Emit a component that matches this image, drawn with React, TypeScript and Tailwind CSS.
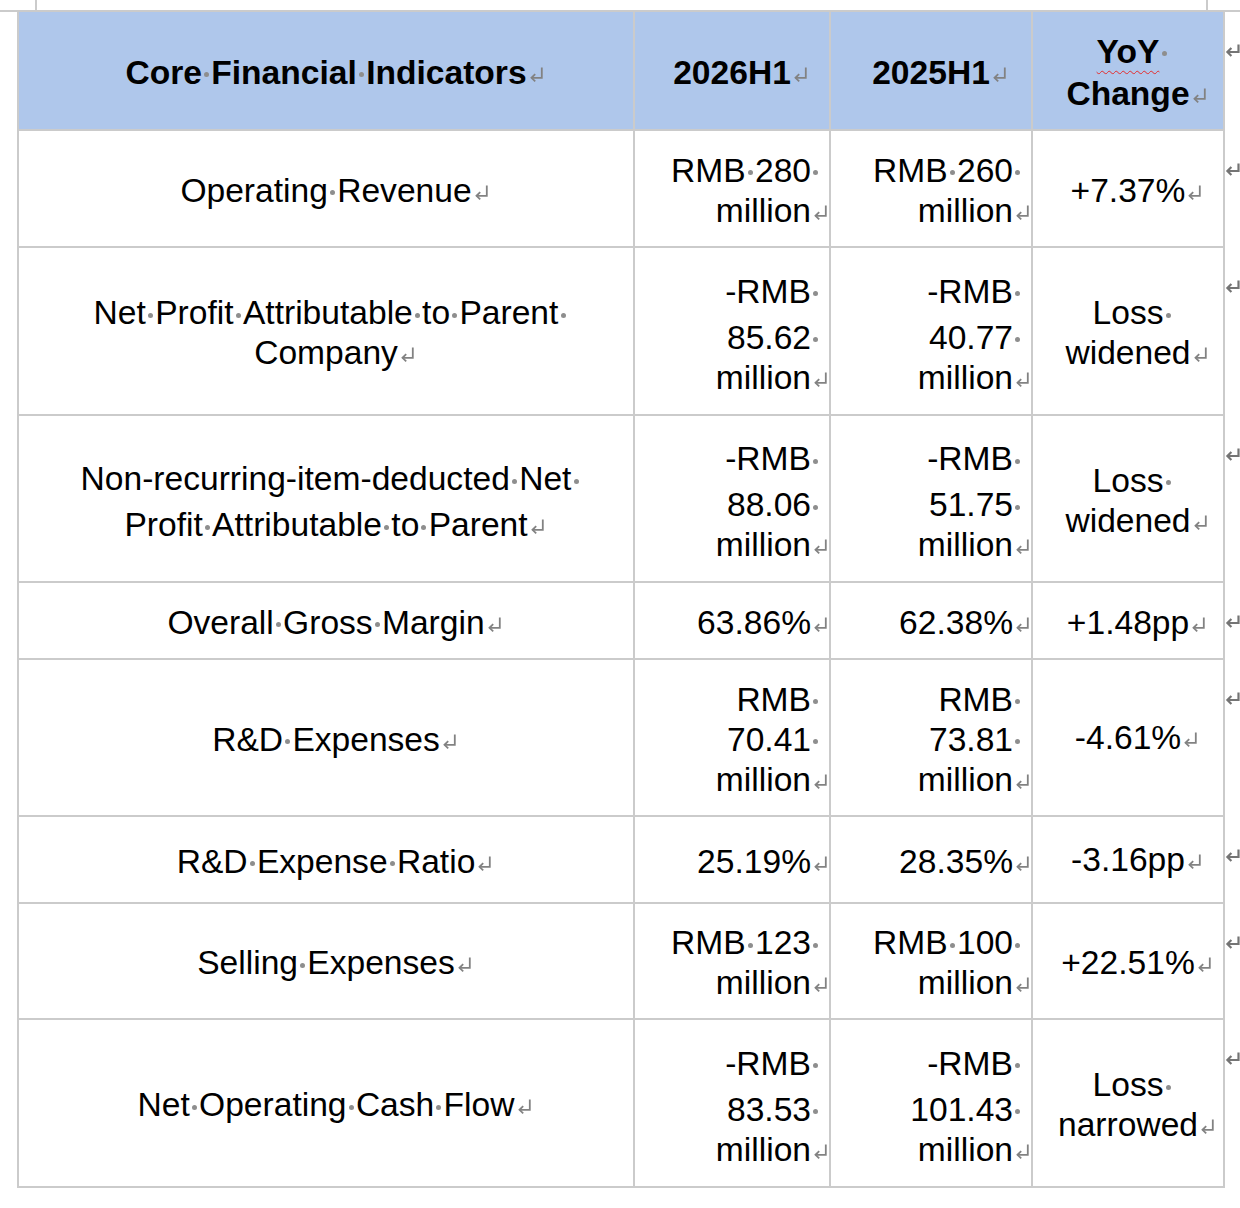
type End = "sp" | "p" | null;
type L = [string, End];

const rows: { h: string; label: L[]; a: L[]; b: L[]; c: L[] }[] = [
  {
    h: "h-[117px]",
    label: [["Operating Revenue", "p"]],
    a: [["RMB 280", "sp"], ["million", "p"]],
    b: [["RMB 260", "sp"], ["million", "p"]],
    c: [["+7.37%", "p"]],
  },
  {
    h: "h-[168px]",
    label: [["Net Profit Attributable to Parent", "sp"], ["Company", "p"]],
    a: [["-RMB", "sp"], ["85.62", "sp"], ["million", "p"]],
    b: [["-RMB", "sp"], ["40.77", "sp"], ["million", "p"]],
    c: [["Loss", "sp"], ["widened", "p"]],
  },
  {
    h: "h-[167px]",
    label: [["Non-recurring-item-deducted Net", "sp"], ["Profit Attributable to Parent", "p"]],
    a: [["-RMB", "sp"], ["88.06", "sp"], ["million", "p"]],
    b: [["-RMB", "sp"], ["51.75", "sp"], ["million", "p"]],
    c: [["Loss", "sp"], ["widened", "p"]],
  },
  {
    h: "h-[77px]",
    label: [["Overall Gross Margin", "p"]],
    a: [["63.86%", "p"]],
    b: [["62.38%", "p"]],
    c: [["+1.48pp", "p"]],
  },
  {
    h: "h-[157px]",
    label: [["R&D Expenses", "p"]],
    a: [["RMB", "sp"], ["70.41", "sp"], ["million", "p"]],
    b: [["RMB", "sp"], ["73.81", "sp"], ["million", "p"]],
    c: [["-4.61%", "p"]],
  },
  {
    h: "h-[87px]",
    label: [["R&D Expense Ratio", "p"]],
    a: [["25.19%", "p"]],
    b: [["28.35%", "p"]],
    c: [["-3.16pp", "p"]],
  },
  {
    h: "h-[116px]",
    label: [["Selling Expenses", "p"]],
    a: [["RMB 123", "sp"], ["million", "p"]],
    b: [["RMB 100", "sp"], ["million", "p"]],
    c: [["+22.51%", "p"]],
  },
  {
    h: "h-[168px]",
    label: [["Net Operating Cash Flow", "p"]],
    a: [["-RMB", "sp"], ["83.53", "sp"], ["million", "p"]],
    b: [["-RMB", "sp"], ["101.43", "sp"], ["million", "p"]],
    c: [["Loss", "sp"], ["narrowed", "p"]],
  },
];

// space shown as a grey middle dot, like Word's formatting marks
function Dot() {
  return (
    <span className="inline-block w-[0.278em] text-center">
      <span className="inline-block w-[5px] h-[5px] rounded-full bg-[#8e8e8e] align-middle" />
    </span>
  );
}

function Para() {
  return (
    <span className="inline-block w-0">
      <svg width="15" height="16" viewBox="0 0 15 16" className="ml-[2px] inline-block">
        <path d="M12.8 0.5 V10.8 H2.6" fill="none" stroke="#828282" strokeWidth="1.8" />
        <path d="M6.2 7.2 L2.5 10.8 L6.2 14.4" fill="none" stroke="#828282" strokeWidth="1.8" />
      </svg>
    </span>
  );
}

function RowEnd() {
  return (
    <svg width="15" height="14" viewBox="0 0 15 14">
      <path d="M13.5 0.5 V8 H2.6" fill="none" stroke="#747474" strokeWidth="2.2" />
      <path d="M6.4 4 L2.4 8 L6.4 12" fill="none" stroke="#747474" strokeWidth="2.2" />
    </svg>
  );
}

function Line({ line, yoy }: { line: L; yoy?: boolean }) {
  const [text, end] = line;
  const words = text.split(" ");
  const hy = text.includes("-");
  return (
    <div className={hy ? "pt-[3px] pb-[6px] whitespace-nowrap" : "whitespace-nowrap"}>
      {words.map((w, i) => (
        <span key={i}>
          {i > 0 && <Dot />}
          {yoy && w === "YoY" ? (
            <span className="underline decoration-wavy decoration-[#e52b2b] decoration-1 underline-offset-[7px]">
              {w}
            </span>
          ) : (
            w
          )}
        </span>
      ))}
      {end === "sp" && (
        <span className="inline-block w-0">
          <Dot />
        </span>
      )}
      {end === "p" && <Para />}
    </div>
  );
}

const cellBase = "h-full pt-[4px] border-r-2 border-b-2 border-[#cbcbcb] flex flex-col justify-center";

function Cell({ lines, w, align, head }: { lines: L[]; w: string; align: "c" | "r"; head?: boolean }) {
  return (
    <div
      className={`${cellBase} ${w} ${align === "c" ? "items-center text-center" : "items-end text-right pr-[18px]"} ${
        head ? "bg-[#afc7eb] font-bold leading-[42px]" : "leading-[40px]"
      }`}
    >
      {lines.map((l, i) => (
        <Line key={i} line={l} yoy={head} />
      ))}
    </div>
  );
}

function Gutter() {
  return (
    <div className="w-[15px] h-full pt-[32px]">
      <RowEnd />
    </div>
  );
}

export default function App() {
  return (
    <div className="w-[1240px] h-[1208px] bg-white text-black text-[33.6px] overflow-hidden font-['Liberation_Sans',Arial,sans-serif]">
      <div className="h-[12px] border-b-2 border-[#cbcbcb]">
        <div className="ml-[35px] w-[1173px] h-full border-l-2 border-r-2 border-[#cbcbcb]" />
      </div>
      <div className="ml-[17px] w-[1223px]">
        <div className="flex h-[119px]">
          <div className="w-[2px] h-full bg-[#cbcbcb]" />
          <Cell w="w-[616px]" align="c" head lines={[["Core Financial Indicators", "p"]]} />
          <Cell w="w-[196px]" align="c" head lines={[["2026H1", "p"]]} />
          <Cell w="w-[202px]" align="c" head lines={[["2025H1", "p"]]} />
          <Cell w="w-[192px]" align="c" head lines={[["YoY", "sp"], ["Change", "p"]]} />
          <Gutter />
        </div>
        {rows.map((r, i) => (
          <div key={i} className={`flex ${r.h}`}>
            <div className="w-[2px] h-full bg-[#cbcbcb]" />
            <Cell w="w-[616px]" align="c" lines={r.label} />
            <Cell w="w-[196px]" align="r" lines={r.a} />
            <Cell w="w-[202px]" align="r" lines={r.b} />
            <Cell w="w-[192px]" align="c" lines={r.c} />
            <Gutter />
          </div>
        ))}
      </div>
    </div>
  );
}
